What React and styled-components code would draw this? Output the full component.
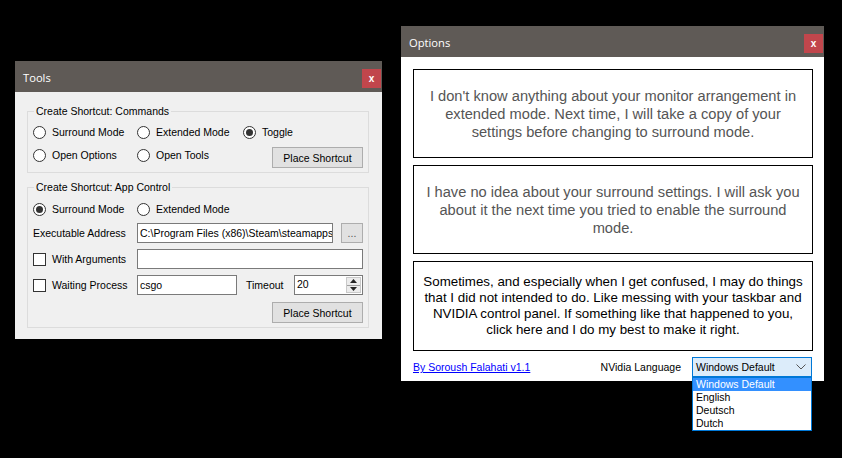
import React from 'react';
import styled, { createGlobalStyle } from 'styled-components';

const Global = createGlobalStyle`
  html, body { margin: 0; padding: 0; background: #000; }
  body {
    width: 842px; height: 458px; overflow: hidden;
    font-family: "Liberation Sans", Arial, sans-serif;
  }
  * { box-sizing: border-box; }
`;

const Desktop = styled.div`
  position: relative;
  width: 842px;
  height: 458px;
  background: #000;
`;

const Window = styled.div`
  position: absolute;
  left: ${p => p.$x}px;
  top: ${p => p.$y}px;
  width: ${p => p.$w}px;
  height: ${p => p.$h}px;
  display: flex;
  flex-direction: column;
  background: ${p => p.$bg};
`;

const TitleBar = styled.div`
  height: 31px;
  flex: none;
  background: #5f5a56;
  display: flex;
  align-items: center;
  justify-content: space-between;
  padding: 0 1px 0 8px;
`;

const Title = styled.span`
  color: #fff;
  font-family: "Open Sans", "Noto Sans", sans-serif;
  font-size: 11.2px;
  padding-top: 1px;
`;

const CloseBtn = styled.div`
  width: 19px;
  height: 19px;
  margin-top: 4px;
  background: #c1464c;
  color: #fff;
  font: bold 10px "Liberation Sans", Arial, sans-serif;
  display: flex;
  align-items: center;
  justify-content: center;
  padding-bottom: 1px;
`;

/* ---------- Tools window ---------- */

const ToolsBody = styled.div`
  flex: 1;
  padding: 19px 13px 11px 12px;
  display: flex;
  flex-direction: column;
  gap: 14px;
  font-size: 10.5px;
  color: #000;
`;

const Group = styled.div`
  position: relative;
  width: 342px;
  border: 1px solid #dcdcdc;
  padding: ${p => p.$pt}px 5px 4px 5px;
  display: flex;
  flex-direction: column;
  gap: 6px;
`;

const Legend = styled.span`
  position: absolute;
  top: -7px;
  left: 6px;
  padding: 0 2px;
  background: #f0f0f0;
  line-height: 13px;
  white-space: nowrap;
`;

const Row = styled.div`
  display: flex;
  align-items: ${p => p.$align || 'center'};
  height: ${p => p.$h || 20}px;
  margin-top: ${p => p.$mt || 0}px;
  justify-content: ${p => p.$justify || 'flex-start'};
`;

const Choice = styled.div`
  display: flex;
  align-items: center;
  height: 16px;
  width: ${p => (p.$w ? `${p.$w}px` : 'auto')};
  flex: none;
  gap: 6px;
  white-space: nowrap;
`;

const RadioCircle = styled.span`
  width: 13px;
  height: 13px;
  border: 1px solid #333;
  border-radius: 50%;
  background: #fff;
  display: flex;
  align-items: center;
  justify-content: center;
  flex: none;
  &::after {
    content: '';
    width: 7px;
    height: 7px;
    border-radius: 50%;
    background: #333;
    display: ${p => (p.$on ? 'block' : 'none')};
  }
`;

const CheckSquare = styled.span`
  width: 13px;
  height: 13px;
  border: 1px solid #333;
  background: #fff;
  flex: none;
`;

const FieldLabel = styled.span`
  width: ${p => p.$w}px;
  margin-left: ${p => p.$ml || 0}px;
  flex: none;
  white-space: nowrap;
`;

const TextBox = styled.div`
  width: ${p => p.$w}px;
  height: 20px;
  flex: none;
  border: 1px solid #7a7a7a;
  background: #fff;
  padding-left: 2px;
  line-height: 18px;
  white-space: nowrap;
  overflow: hidden;
`;

const WinButton = styled.div`
  width: ${p => p.$w}px;
  height: ${p => p.$h || 21}px;
  margin-left: ${p => p.$ml || '0'};
  flex: none;
  border: 1px solid #adadad;
  background: #e1e1e1;
  display: flex;
  align-items: center;
  justify-content: center;
  white-space: nowrap;
  color: ${p => (p.$muted ? '#555' : '#000')};
`;

const NumberBox = styled.div`
  width: 69px;
  height: 20px;
  flex: none;
  border: 1px solid #7a7a7a;
  background: #fff;
  display: flex;
  align-items: stretch;
`;

const NumberValue = styled.span`
  flex: 1;
  padding-left: 2px;
  line-height: 17px;
`;

const Spinner = styled.div`
  width: 15px;
  margin: 1px 1px 1px 0;
  display: flex;
  flex-direction: column;
  border: 1px solid #c9c9c9;
  background: #ececec;
`;

const SpinHalf = styled.div`
  flex: 1;
  display: flex;
  align-items: center;
  justify-content: center;
  border-top: ${p => (p.$down ? '1px solid #a0a0a0' : 'none')};
`;

/* ---------- Options window ---------- */

const OptionsBody = styled.div`
  flex: 1;
  padding: 12px 11px 4px 12px;
  display: flex;
  flex-direction: column;
`;

const InfoBox = styled.div`
  height: ${p => p.$h}px;
  margin-top: ${p => p.$mt || 0}px;
  flex: none;
  border: 1px solid #000;
  display: flex;
  align-items: center;
  justify-content: center;
  text-align: center;
  white-space: nowrap;
  font-family: "Liberation Sans", Arial, sans-serif;
  font-size: ${p => p.$fs}px;
  line-height: ${p => p.$lh}px;
  color: ${p => p.$color};
  padding-top: ${p => p.$pt || 0}px;
`;

const Footer = styled.div`
  margin-top: 6px;
  height: 20px;
  display: flex;
  align-items: center;
  font-size: 10.5px;
  color: #000;
`;

const Link = styled.a`
  color: #0000ff;
  text-decoration: underline;
  cursor: pointer;
`;

const FooterLabel = styled.span`
  margin-left: auto;
  margin-right: 11px;
`;

const Select = styled.div`
  position: relative;
  width: 120px;
  height: 20px;
  margin-right: 1px;
  border: 1px solid #0078d7;
  background: #dcecfa;
  display: flex;
  align-items: center;
  justify-content: space-between;
  padding: 0 5px 0 3px;
`;

const DropList = styled.div`
  position: absolute;
  top: 19px;
  left: -1px;
  width: 120px;
  border: 1px solid #0078d7;
  background: #fff;
  z-index: 2;
`;

const DropItem = styled.div`
  height: 13px;
  line-height: 13px;
  padding-left: 3px;
  background: ${p => (p.$active ? '#3390ff' : '#fff')};
  color: ${p => (p.$active ? '#fff' : '#000')};
  white-space: nowrap;
`;

const Radio = ({ on, w, children }) => (
  <Choice $w={w}>
    <RadioCircle $on={on} />
    <span>{children}</span>
  </Choice>
);

const Check = ({ w, children }) => (
  <Choice $w={w}>
    <CheckSquare />
    <span>{children}</span>
  </Choice>
);

export default function App() {
  return (
    <Desktop>
      <Global />
      <Window $x={15} $y={61} $w={367} $h={278} $bg="#f0f0f0">
        <TitleBar>
          <Title>Tools</Title>
          <CloseBtn>x</CloseBtn>
        </TitleBar>
        <ToolsBody>
          <Group $pt={12}>
            <Legend>Create Shortcut: Commands</Legend>
            <Row $h={16}>
              <Radio w={104}>Surround Mode</Radio>
              <Radio w={106}>Extended Mode</Radio>
              <Radio on>Toggle</Radio>
            </Row>
            <Row $h={21} $mt={1} $align="flex-start">
              <Radio w={104}>Open Options</Radio>
              <Radio w={106}>Open Tools</Radio>
              <WinButton $w={91} $ml="auto">Place Shortcut</WinButton>
            </Row>
          </Group>
          <Group $pt={13}>
            <Legend>Create Shortcut: App Control</Legend>
            <Row $h={16}>
              <Radio on w={104}>Surround Mode</Radio>
              <Radio w={106}>Extended Mode</Radio>
            </Row>
            <Row>
              <FieldLabel $w={104}>Executable Address</FieldLabel>
              <TextBox $w={196}>{"C:\\Program Files (x86)\\Steam\\steamapps"}</TextBox>
              <WinButton $w={22} $h={20} $ml="8px" $muted>...</WinButton>
            </Row>
            <Row>
              <Check w={104}>With Arguments</Check>
              <TextBox $w={226} />
            </Row>
            <Row>
              <Check w={104}>Waiting Process</Check>
              <TextBox $w={100}>csgo</TextBox>
              <FieldLabel $w={48} $ml={9}>Timeout</FieldLabel>
              <NumberBox>
                <NumberValue>20</NumberValue>
                <Spinner>
                  <SpinHalf>
                    <svg width="7" height="4" viewBox="0 0 7 4"><polygon points="3.5,0 7,4 0,4" fill="#222" /></svg>
                  </SpinHalf>
                  <SpinHalf $down>
                    <svg width="7" height="4" viewBox="0 0 7 4"><polygon points="0,0 7,0 3.5,4" fill="#222" /></svg>
                  </SpinHalf>
                </Spinner>
              </NumberBox>
            </Row>
            <Row $h={21} $mt={1} $justify="flex-end">
              <WinButton $w={91}>Place Shortcut</WinButton>
            </Row>
          </Group>
        </ToolsBody>
      </Window>

      <Window $x={401} $y={26} $w={423} $h={355} $bg="#ffffff">
        <TitleBar>
          <Title>Options</Title>
          <CloseBtn>x</CloseBtn>
        </TitleBar>
        <OptionsBody>
          <InfoBox $h={89} $fs={14.67} $lh={17.7} $color="#555555" $pt={3}>
            <div>
              I don't know anything about your monitor arrangement in<br />
              extended mode. Next time, I will take a copy of your<br />
              settings before changing to surround mode.
            </div>
          </InfoBox>
          <InfoBox $h={89} $mt={7} $fs={14.67} $lh={17.7} $color="#555555" $pt={3}>
            <div>
              I have no idea about your surround settings. I will ask you<br />
              about it the next time you tried to enable the surround<br />
              mode.
            </div>
          </InfoBox>
          <InfoBox $h={90} $mt={7} $fs={13.33} $lh={16} $color="#000000">
            <div>
              Sometimes, and especially when I get confused, I may do things<br />
              that I did not intended to do. Like messing with your taskbar and<br />
              NVIDIA control panel. If something like that happened to you,<br />
              click here and I do my best to make it right.
            </div>
          </InfoBox>
          <Footer>
            <Link>By Soroush Falahati v1.1</Link>
            <FooterLabel>NVidia Language</FooterLabel>
            <Select>
              <span>Windows Default</span>
              <svg width="10" height="6" viewBox="0 0 10 6">
                <polyline points="0.5,0.5 5,5 9.5,0.5" fill="none" stroke="#555" strokeWidth="1" />
              </svg>
              <DropList>
                <DropItem $active>Windows Default</DropItem>
                <DropItem>English</DropItem>
                <DropItem>Deutsch</DropItem>
                <DropItem>Dutch</DropItem>
              </DropList>
            </Select>
          </Footer>
        </OptionsBody>
      </Window>
    </Desktop>
  );
}
